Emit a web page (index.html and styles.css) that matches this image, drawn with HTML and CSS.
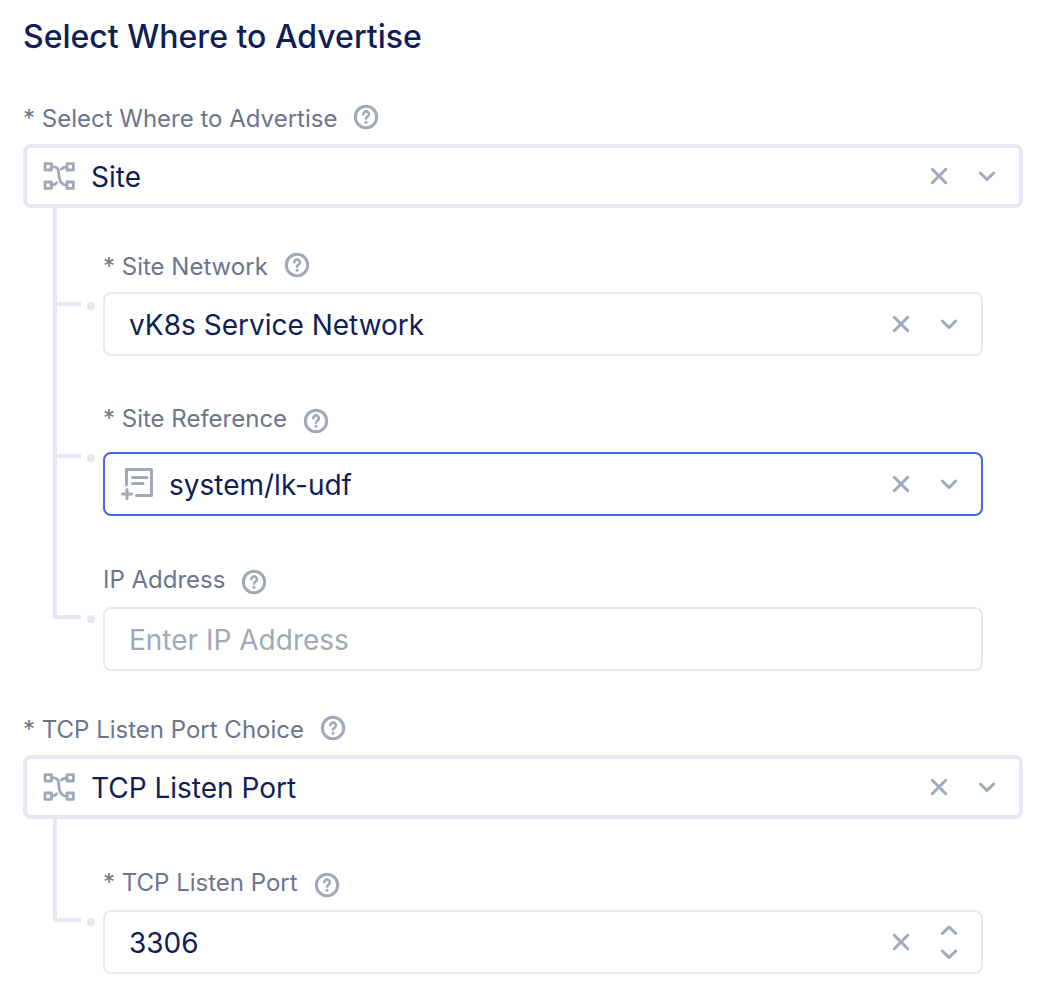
FILE: index.html
```html
<!DOCTYPE html>
<html lang="en">
<head>
<meta charset="utf-8">
<meta name="viewport" content="width=device-width, initial-scale=1">
<title>Select Where to Advertise</title>
<link rel="stylesheet" href="styles.css">
</head>
<body>
<svg class="sprite" aria-hidden="true">
  <symbol id="help" viewBox="0 0 26 26">
    <circle cx="13" cy="13" r="10.7" stroke-width="3"/>
    <path d="M10.300 10.200a2.800 2.800 0 1 1 4.300 2.400c-1 .6-1.600 1.100-1.600 2" stroke-width="2.600"/>
    <circle class="solid" cx="13" cy="18.200" r="1.500"/>
  </symbol>
  <symbol id="branch" viewBox="0 0 32 32">
    <g stroke-width="2.8" stroke-linejoin="round">
      <rect x="2" y="3.600" width="6.400" height="6.400"/>
      <rect x="24" y="3.600" width="6.400" height="6.400"/>
      <rect x="2" y="22" width="6.400" height="6.400"/>
      <rect x="24" y="22" width="6.400" height="6.400"/>
    </g>
    <path d="M8.400 6.800h1.600c7 0 5.200 5.700 6.300 11.200.9 4.900 3 7.200 7.700 7.200M24 6.800c-3 0-4.700.900-5.700 2.400M8.400 25.200c2.600 0 4.300-.900 5.300-2.400" stroke-width="2.8"/>
  </symbol>
  <symbol id="reference" viewBox="0 0 32 32">
    <g stroke-width="3">
      <path d="M5.500 17V1.500h25v26H15.500" stroke-linejoin="round"/>
      <path d="M11.500 9.500h14.500M11.500 15.500h10.500M1.500 26h9M6 21.500v9"/>
    </g>
  </symbol>
  <symbol id="clear" viewBox="0 0 32 32"><path d="M9.300 9.300l13.400 13.400M22.700 9.300L9.300 22.700" stroke-width="3"/></symbol>
  <symbol id="down" viewBox="0 0 32 24"><path d="M9.300 9l6.700 6.500L22.700 9" stroke-width="3" stroke-linejoin="round"/></symbol>
  <symbol id="up" viewBox="0 0 32 24"><path d="M9.300 15.500L16 9l6.700 6.500" stroke-width="3" stroke-linejoin="round"/></symbol>
</svg>

<form class="form">
  <h1 class="title">Select Where to Advertise</h1>

  <section class="section">
    <div class="label-row raised">
      <label for="where">* Select Where to Advertise</label>
      <button type="button" class="help" aria-label="Help"><svg><use href="#help"/></svg></button>
    </div>
    <div class="control parent">
      <svg class="lead"><use href="#branch"/></svg>
      <select id="where" class="value"><option>Site</option></select>
      <button type="button" class="action" aria-label="Clear"><svg class="icon"><use href="#clear"/></svg></button>
      <svg class="chevron"><use href="#down"/></svg>
    </div>
    <div class="children">
      <div class="field compact">
        <div class="label-row raised">
          <label for="network">* Site Network</label>
          <button type="button" class="help" aria-label="Help"><svg><use href="#help"/></svg></button>
        </div>
        <div class="control plain">
          <select id="network" class="value"><option>vK8s Service Network</option></select>
          <button type="button" class="action" aria-label="Clear"><svg class="icon"><use href="#clear"/></svg></button>
          <svg class="chevron"><use href="#down"/></svg>
        </div>
      </div>
      <div class="field reference">
        <div class="label-row">
          <label for="reference-site">* Site Reference</label>
          <button type="button" class="help" aria-label="Help"><svg><use href="#help"/></svg></button>
        </div>
        <div class="control active">
          <svg class="lead"><use href="#reference"/></svg>
          <select id="reference-site" class="value"><option>system/lk-udf</option></select>
          <button type="button" class="action" aria-label="Clear"><svg class="icon"><use href="#clear"/></svg></button>
          <svg class="chevron"><use href="#down"/></svg>
        </div>
      </div>
      <div class="field">
        <div class="label-row">
          <label for="ip">IP Address</label>
          <button type="button" class="help" aria-label="Help"><svg><use href="#help"/></svg></button>
        </div>
        <div class="control plain">
          <input id="ip" class="value" type="text" placeholder="Enter IP Address">
        </div>
      </div>
    </div>
  </section>

  <section class="section">
    <div class="label-row raised">
      <label for="choice">* TCP Listen Port Choice</label>
      <button type="button" class="help" aria-label="Help"><svg><use href="#help"/></svg></button>
    </div>
    <div class="control parent">
      <svg class="lead"><use href="#branch"/></svg>
      <select id="choice" class="value"><option>TCP Listen Port</option></select>
      <button type="button" class="action" aria-label="Clear"><svg class="icon"><use href="#clear"/></svg></button>
      <svg class="chevron"><use href="#down"/></svg>
    </div>
    <div class="children">
      <div class="field">
        <div class="label-row">
          <label for="port">* TCP Listen Port</label>
          <button type="button" class="help" aria-label="Help"><svg><use href="#help"/></svg></button>
        </div>
        <div class="control plain">
          <input id="port" class="value" type="number" value="3306">
          <button type="button" class="action" aria-label="Clear"><svg class="icon"><use href="#clear"/></svg></button>
          <div class="stepper">
            <button type="button" aria-label="Increase"><svg class="chevron"><use href="#up"/></svg></button>
            <button type="button" aria-label="Decrease"><svg class="chevron"><use href="#down"/></svg></button>
          </div>
        </div>
      </div>
    </div>
  </section>
</form>
</body>
</html>
```
FILE: styles.css
```css
:root {
  --ink: #0f1e57;
  --label: #6b758c;
  --icon: #a0a8b9;
  --line: #e6e9f3;
  --accent: #4169e1;
}

*,
*::before,
*::after { box-sizing: border-box; }

body {
  margin: 0;
  background: #fff;
  color: var(--ink);
  font-family: Inter, "Liberation Sans", sans-serif;
}

button {
  display: block;
  flex: none;
  margin: 0;
  padding: 0;
  border: 0;
  background: none;
  cursor: pointer;
}

svg {
  display: block;
  flex: none;
  fill: none;
  stroke: var(--icon);
  stroke-linecap: round;
}

.solid {
  fill: var(--icon);
  stroke: none;
}

.sprite {
  position: absolute;
  width: 0;
  height: 0;
}

.form { padding: 16px 31px 32px 23px; }

.title {
  margin: 0 0 46px;
  font-size: 32px;
  font-weight: 500;
  line-height: 42px;
}

.section + .section { margin-top: 44px; }

.label-row {
  display: flex;
  align-items: flex-end;
  gap: 16px;
  height: 30px;
  margin-bottom: 12px;
  color: var(--label);
  font-size: 24px;
  line-height: 30px;
}

.label-row.raised {
  align-items: flex-start;
  margin-bottom: 10px;
}

.help,
.help svg {
  width: 26px;
  height: 26px;
}

.control {
  display: flex;
  align-items: center;
  gap: 16px;
  height: 64px;
  padding: 0 16px;
  border: 2px solid var(--line);
  border-radius: 8px;
}

.control.parent { border-width: 4px; }
.control.plain { padding-left: 24px; }
.control.active { border-color: var(--accent); }

.value {
  flex: 1;
  min-width: 0;
  height: 48px;
  margin: 0;
  padding: 2px 0 0;
  border: 0;
  outline: 0;
  appearance: none;
  background: none;
  color: var(--ink);
  font: 28px/36px Inter, "Liberation Sans", sans-serif;
}

.value::placeholder {
  color: var(--icon);
  opacity: 1;
}

.value[type="number"] { appearance: textfield; }

.lead,
.action,
.icon {
  width: 32px;
  height: 32px;
}

.chevron {
  width: 32px;
  height: 24px;
}

.children {
  margin-left: 30px;
  margin-right: 40px;
}

/* Each nested field carries its own stretch of the tree line. */
.field {
  --space: 49px;
  position: relative;
  padding: var(--space) 0 0 46px;
  border-left: 4px solid var(--line);
}

.field.compact { --space: 44px; }
.field.reference { --space: 48px; }
.field.reference .label-row { margin-bottom: 18px; }
.field:last-child { border-color: transparent; }

.field::before {
  content: "";
  position: absolute;
  top: 0;
  left: -4px;
  width: 28px;
  height: calc(var(--space) + 54px);
  border: solid var(--line);
  border-width: 0 0 4px 4px;
}

.field::after {
  content: "";
  position: absolute;
  top: calc(var(--space) + 50px);
  left: 30px;
  width: 8px;
  height: 8px;
  border-radius: 50%;
  background: var(--line);
}
```
